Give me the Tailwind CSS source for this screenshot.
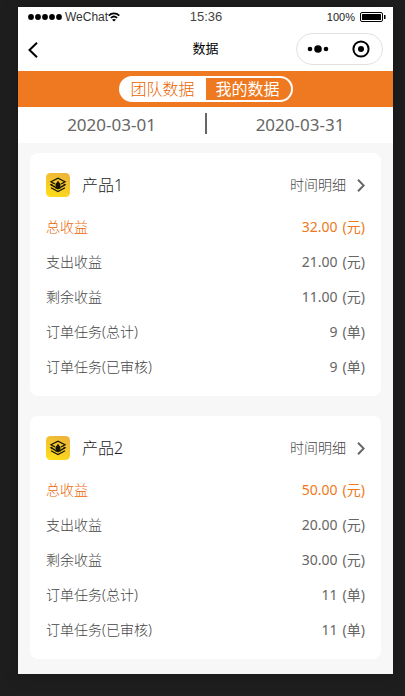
<!DOCTYPE html>
<html lang="zh-CN">
<head>
    <meta charset="UTF-8" />
    <meta name="viewport" content="width=device-width, initial-scale=1.0" />
    <title>数据</title>
    <script src="https://cdn.jsdelivr.net/npm/@tailwindcss/browser@4"></script>
</head>
<body class="bg-[#1e1e1e] h-screen overflow-hidden pt-[7px] pl-[18px] font-['Noto_Sans','Noto_Sans_CJK_SC',sans-serif]">
    <div class="w-[375px] h-[667px] bg-[#f7f7f7] shadow-[0_0_12px_#181818] overflow-hidden">
        <!-- 状态栏 -->
        <div class="h-5 bg-white flex items-center justify-between pl-[10px] pr-[7px] text-black font-['Liberation_Sans',sans-serif]">
            <div class="w-[119px] flex items-center">
                <svg class="w-[34px] h-[6px] mr-[3px]" viewBox="0 0 34 6">
                    <circle cx="3" cy="3" r="2.9"/>
                    <circle cx="10" cy="3" r="2.9"/>
                    <circle cx="17" cy="3" r="2.9"/>
                    <circle cx="24" cy="3" r="2.9"/>
                    <circle cx="31" cy="3" r="2.9"/>
                </svg>
                <span class="text-xs leading-5 text-[#333]">WeChat</span>
                <svg class="w-3 h-[10px]" viewBox="0 0 12 10" fill="none" stroke="#000" stroke-width="1.7">
                    <path d="M.7 3.6c3-3 7.6-3 10.6 0M2.8 6c1.9-1.8 4.5-1.8 6.4 0"/>
                    <path d="M6 9.6 4 7.7c1.2-1 2.8-1 4 0z" fill="#000" stroke="none"/>
                </svg>
            </div>
            <span class="text-[13px] leading-5 text-[#444]">15:36</span>
            <div class="w-[121px] flex items-center justify-end">
                <span class="text-[11px] leading-5 mr-[5px] text-[#222]">100%</span>
                <svg class="w-[26px] h-[10px]" viewBox="0 0 26 10">
                    <rect x=".5" y=".5" width="22" height="9" rx="1.5" fill="none" stroke="#000"/>
                    <rect x="2" y="2" width="19" height="6" rx=".5"/>
                    <path d="M24 3h1.5v4H24z"/>
                </svg>
            </div>
        </div>

        <!-- 导航栏 -->
        <div class="h-11 bg-white flex items-center justify-between pl-[10px] pr-[10px]">
            <div class="w-[87px]">
                <svg class="w-[10px] h-4 mt-[2px]" viewBox="0 0 10 16" fill="none" stroke="#000" stroke-width="2">
                    <path d="M9 .7 1.5 8 9 15.3"/>
                </svg>
            </div>
            <span class="text-[13px] leading-5 text-black pb-[3px]">数据</span>
            <div class="w-[87px] h-8 rounded-full border border-[#e2e2e2] flex items-center justify-between pl-[10px] pr-3">
                <svg class="w-[22px] h-2" viewBox="0 0 22 8">
                    <circle cx="3" cy="4" r="2.3"/>
                    <circle cx="11" cy="4" r="3.8"/>
                    <circle cx="19" cy="4" r="2.3"/>
                </svg>
                <svg class="w-[18px] h-[18px]" viewBox="0 0 18 18">
                    <circle cx="9" cy="9" r="7.6" fill="none" stroke="#000" stroke-width="2"/>
                    <circle cx="9" cy="9" r="3"/>
                </svg>
            </div>
        </div>

        <!-- 切换 -->
        <div class="h-9 bg-[#ef7920] flex items-center justify-center">
            <div class="w-[174px] h-[26px] rounded-full bg-white p-[2px] flex text-base leading-[22px]">
                <div class="w-[85px] text-[#ec6400] pl-[10px] font-light">团队数据</div>
                <div class="flex-1 bg-[#ef7920] rounded-r-full text-white pl-[10px]">我的数据</div>
            </div>
        </div>

        <!-- 日期 -->
        <div class="h-9 bg-white flex items-center text-[17px] text-[#666]">
            <div class="w-[187px] text-center pb-[1px]">2020-03-01</div>
            <div class="w-[2px] h-[21px] mb-[3px] bg-[#666]"></div>
            <div class="flex-1 text-center pb-[1px]">2020-03-31</div>
        </div>

        <!-- 产品列表 -->
        <div class="px-3 pt-[10px] space-y-5 text-sm text-[#444] font-light [word-spacing:1.5px]">
            <div class="h-[243px] bg-white rounded-lg px-4 pt-2">
                <div class="h-12 flex items-center">
                    <svg class="w-6 h-6 mr-3" viewBox="0 0 24 24" fill="none" stroke="#171500" stroke-width="1.3">
                        <defs>
                            <linearGradient id="gold" x1=".7" y1="0" x2=".3" y2="1">
                                <stop offset="0" stop-color="#edb43b"/>
                                <stop offset="1" stop-color="#fddd18"/>
                            </linearGradient>
                        </defs>
                        <rect width="24" height="24" rx="4.5" fill="url(#gold)" stroke="none"/>
                        <path d="M9 11 5 8.700 12 5.200 19 8.700 15 11M9 13.800 5 11.800l1.500-.8M15 13.800l4-2-1.500-.8M5 14.800l7 3.800 7-3.800M5 12l7 3.800 7-3.800"/>
                        <path d="M12 7.800 13.200 9.500 14.500 11v4.500h-5V11l1.300-1.500z" fill="#171500" stroke="none"/>
                    </svg>
                    <span class="flex-1 text-base text-[#222]">产品1</span>
                    <span>时间明细</span>
                    <svg class="w-2 h-[13px] ml-[11px]" viewBox="0 0 8 13" fill="none" stroke="#666" stroke-width="2">
                        <path d="M1 .8 6.7 6.5 1 12.2"/>
                    </svg>
                </div>
                <div class="h-[35px] flex items-center justify-between text-[#ec6400]"><span>总收益</span><span class="font-normal text-[#ef7920]">32.00 (元)</span></div>
                <div class="h-[35px] flex items-center justify-between"><span>支出收益</span><span class="font-normal text-[#666]">21.00 (元)</span></div>
                <div class="h-[35px] flex items-center justify-between"><span>剩余收益</span><span class="font-normal text-[#666]">11.00 (元)</span></div>
                <div class="h-[35px] flex items-center justify-between"><span>订单任务(总计)</span><span class="font-normal text-[#666]">9 (单)</span></div>
                <div class="h-[35px] flex items-center justify-between"><span>订单任务(已审核)</span><span class="font-normal text-[#666]">9 (单)</span></div>
            </div>

            <div class="h-[243px] bg-white rounded-lg px-4 pt-2">
                <div class="h-12 flex items-center">
                    <svg class="w-6 h-6 mr-3" viewBox="0 0 24 24" fill="none" stroke="#171500" stroke-width="1.3">
                        <rect width="24" height="24" rx="4.5" fill="url(#gold)" stroke="none"/>
                        <path d="M9 11 5 8.700 12 5.200 19 8.700 15 11M9 13.800 5 11.800l1.500-.8M15 13.800l4-2-1.500-.8M5 14.800l7 3.800 7-3.800M5 12l7 3.800 7-3.800"/>
                        <path d="M12 7.800 13.200 9.500 14.500 11v4.500h-5V11l1.300-1.500z" fill="#171500" stroke="none"/>
                    </svg>
                    <span class="flex-1 text-base text-[#222]">产品2</span>
                    <span>时间明细</span>
                    <svg class="w-2 h-[13px] ml-[11px]" viewBox="0 0 8 13" fill="none" stroke="#666" stroke-width="2">
                        <path d="M1 .8 6.7 6.5 1 12.2"/>
                    </svg>
                </div>
                <div class="h-[35px] flex items-center justify-between text-[#ec6400]"><span>总收益</span><span class="font-normal text-[#ef7920]">50.00 (元)</span></div>
                <div class="h-[35px] flex items-center justify-between"><span>支出收益</span><span class="font-normal text-[#666]">20.00 (元)</span></div>
                <div class="h-[35px] flex items-center justify-between"><span>剩余收益</span><span class="font-normal text-[#666]">30.00 (元)</span></div>
                <div class="h-[35px] flex items-center justify-between"><span>订单任务(总计)</span><span class="font-normal text-[#666]">11 (单)</span></div>
                <div class="h-[35px] flex items-center justify-between"><span>订单任务(已审核)</span><span class="font-normal text-[#666]">11 (单)</span></div>
            </div>
        </div>
    </div>
</body>
</html>
